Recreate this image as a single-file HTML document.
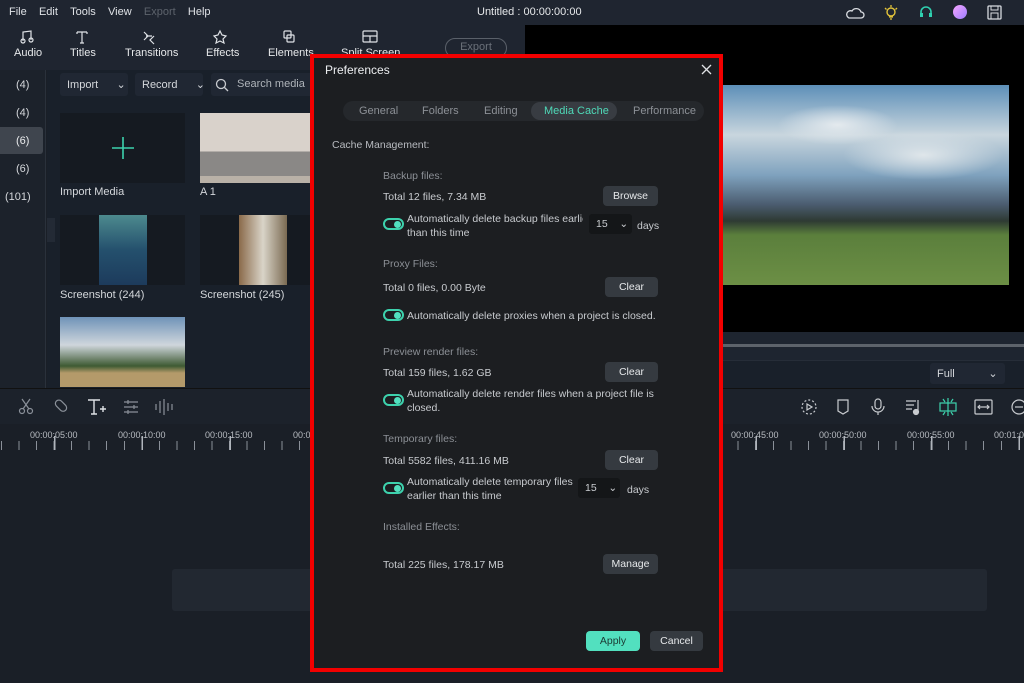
<!DOCTYPE html>
<html><head><meta charset="utf-8"><style>
*{margin:0;padding:0;box-sizing:border-box}
body{width:1024px;height:683px;overflow:hidden;background:#1a1f27;font-family:"Liberation Sans",sans-serif;color:#d0d3d8;position:relative;font-size:11px}
.a{position:absolute;white-space:nowrap}
.menu{left:0;top:0;width:1024px;height:25px;background:#1f2530}
.tool{left:0;top:25px;width:525px;height:45px;background:#1f2530}
.tb{color:#e6e8ea;font-size:11px;text-align:center}
.dlg{left:310px;top:54px;width:413px;height:618px;border:4px solid #f20000;background:#1c1e21}
.lab{color:#8c9096;font-size:10.5px}
.txt{color:#c8cbcf;font-size:10.5px}
.btn{background:#353a40;color:#e6e8ea;border-radius:4px;text-align:center;font-size:10.5px;line-height:20px;height:20px}
.tog{width:21px;height:12px;border:2px solid #3dd2ad;border-radius:7px}
.tog:after{content:"";position:absolute;right:1px;top:1px;width:7px;height:7px;border-radius:50%;background:#52e0bf}
.dd{background:#141618;border-radius:3px;height:20px;color:#c8cbcf;font-size:10.5px;line-height:20px;padding-left:7px}
.tick{height:14px;background:repeating-linear-gradient(90deg,#8a9099 0 1px,transparent 1px 17.54px)}
.maj{height:14px;background:repeating-linear-gradient(90deg,#b0b5bc 0 1.5px,transparent 1.5px 87.7px)}
.rl{color:#b8bcc2;font-size:9px}
</style></head><body>
<div class="a menu"></div>
<div class="a" style="left:9px;top:6px;font-size:11px;color:#dfe2e6;word-spacing:0">File&nbsp;&nbsp;&nbsp;&nbsp;Edit&nbsp;&nbsp;&nbsp;&nbsp;Tools&nbsp;&nbsp;&nbsp;&nbsp;View&nbsp;&nbsp;&nbsp;&nbsp;<span style="color:#5d636c">Export</span>&nbsp;&nbsp;&nbsp;&nbsp;Help</div>
<div class="a" style="left:477px;top:6px;color:#e6e8ea">Untitled : 00:00:00:00</div>
<svg class="a" style="left:845px;top:4px" width="170" height="18" viewBox="0 0 170 18">
<path d="M4 14h12a3 3 0 0 0 0-6a5 5 0 0 0-9-1a3.5 3.5 0 0 0-3 7z" fill="none" stroke="#d8dbe0" stroke-width="1.3"/>
<g transform="translate(38,0)"><circle cx="8" cy="8" r="4" fill="none" stroke="#e3c43a" stroke-width="1.4"/><path d="M6 13h4M7 15h2M8 1v2M2 4l1.5 1.5M14 4l-1.5 1.5" stroke="#e3c43a" stroke-width="1.3"/></g>
<g transform="translate(73,0)"><path d="M3 11V8a5 5 0 0 1 10 0v3" fill="none" stroke="#2fd0b0" stroke-width="1.6"/><rect x="2" y="9" width="3" height="4" fill="#2fd0b0"/><rect x="11" y="9" width="3" height="4" fill="#2fd0b0"/></g>
<defs><linearGradient id="g" x1="0" y1="0" x2="1" y2="1"><stop offset="0" stop-color="#f7a6ff"/><stop offset="1" stop-color="#9c7cff"/></linearGradient></defs>
<circle cx="115" cy="8" r="7" fill="url(#g)"/>
<g transform="translate(142,1)"><rect x="1" y="1" width="13" height="13" rx="1" fill="none" stroke="#d8dbe0" stroke-width="1.3"/><rect x="4" y="1" width="7" height="4" fill="none" stroke="#d8dbe0"/><rect x="4" y="8" width="7" height="6" fill="none" stroke="#d8dbe0"/></g>
</svg>
<div class="a tool"></div>
<svg class="a" style="left:20px;top:29px" width="370" height="16" viewBox="0 0 370 16" fill="none" stroke="#dfe2e6" stroke-width="1.2">
<path d="M3 12V3l8-1v9"/><circle cx="3" cy="12" r="2"/><circle cx="11" cy="11" r="2"/>
<path d="M57 3h10M62 3v11M57 3v2M67 3v2M60 14h4"/>
<path d="M124 3l4 4l-4 4M134 7l-4 4l4 4M126 7h6"/>
<path d="M200 2l2 4l4 1l-3 3l1 4l-4-2l-4 2l1-4l-3-3l4-1z"/>
<rect x="264" y="2" width="7" height="7" rx="1"/><rect x="267" y="6" width="7" height="7" rx="1"/>
<rect x="343" y="2" width="14" height="11" rx="1"/><path d="M343 7h14M350 7v6"/>
</svg>
<div class="a tb" style="left:14px;top:47px">Audio</div>
<div class="a tb" style="left:70px;top:47px">Titles</div>
<div class="a tb" style="left:125px;top:47px">Transitions</div>
<div class="a tb" style="left:206px;top:47px">Effects</div>
<div class="a tb" style="left:268px;top:47px">Elements</div>
<div class="a tb" style="left:341px;top:47px">Split Screen</div>
<div class="a" style="left:445px;top:38px;width:62px;height:20px;border:1.5px solid #5a6069;border-radius:10px;color:#6a7079;text-align:center;line-height:17px">Export</div>
<div class="a" style="left:0;top:70px;width:46px;height:318px;background:#1c222b;border-right:1px solid #2a313b"></div>
<div class="a" style="left:0;top:127px;width:43px;height:27px;background:#3f454e;border-radius:0 3px 3px 0"></div>
<div class="a" style="left:16px;top:79px;color:#d4d7db">(4)</div>
<div class="a" style="left:16px;top:107px;color:#d4d7db">(4)</div>
<div class="a" style="left:16px;top:135px;color:#e8eaec">(6)</div>
<div class="a" style="left:16px;top:163px;color:#d4d7db">(6)</div>
<div class="a" style="left:5px;top:191px;color:#d4d7db">(101)</div>
<div class="a" style="left:47px;top:70px;width:270px;height:318px;background:#19202a"></div>
<div class="a" style="left:60px;top:73px;width:68px;height:23px;background:#202733;border-radius:3px;padding:5px 7px;color:#d4d7db">Import&nbsp;&nbsp;&nbsp;&nbsp;&nbsp;&nbsp;⌄</div>
<div class="a" style="left:135px;top:73px;width:68px;height:23px;background:#202733;border-radius:3px;padding:5px 7px;color:#d4d7db">Record&nbsp;&nbsp;&nbsp;&nbsp;&nbsp;&nbsp;⌄</div>
<div class="a" style="left:211px;top:73px;width:110px;height:23px;background:#202733;border-radius:3px;padding:5px 26px;color:#aeb3b9">Search media</div>
<svg class="a" style="left:215px;top:78px" width="14" height="14"><circle cx="6" cy="6" r="4.5" fill="none" stroke="#c8cbcf" stroke-width="1.3"/><path d="M9.5 9.5L13 13" stroke="#c8cbcf" stroke-width="1.3"/></svg>
<div class="a" style="left:60px;top:113px;width:125px;height:70px;background:#151a21"></div>
<svg class="a" style="left:111px;top:136px" width="24" height="24"><path d="M12 1v22M1 12h22" stroke="#3dd2ad" stroke-width="1.6"/></svg>
<div class="a" style="left:60px;top:186px;color:#d4d7db">Import Media</div>
<div class="a" style="left:200px;top:113px;width:110px;height:70px;background:linear-gradient(180deg,#d9d2cb 0 55%,#8a8886 55% 90%,#b9b1a7 90%)"></div>
<div class="a" style="left:200px;top:186px;color:#d4d7db">A 1</div>
<div class="a" style="left:60px;top:215px;width:125px;height:70px;background:#151a21"></div>
<div class="a" style="left:99px;top:215px;width:48px;height:70px;background:linear-gradient(180deg,#4d8a8e,#24506d 50%,#1d3b5c)"></div>
<div class="a" style="left:200px;top:215px;width:110px;height:70px;background:#151a21"></div>
<div class="a" style="left:239px;top:215px;width:48px;height:70px;background:linear-gradient(90deg,#8a6a4a,#d9d4c8 50%,#7a6a52)"></div>
<div class="a" style="left:60px;top:289px;color:#d4d7db">Screenshot (244)</div>
<div class="a" style="left:200px;top:289px;color:#d4d7db">Screenshot (245)</div>
<div class="a" style="left:60px;top:317px;width:125px;height:70px;background:linear-gradient(180deg,#6f93b8 0,#cfd6dc 40%,#3e5a33 70%,#b49a6a 80%)"></div>
<div class="a" style="left:47px;top:218px;width:8px;height:24px;background:#232a35"></div>
<div class="a" style="left:525px;top:25px;width:499px;height:307px;background:#000"></div>
<div class="a" style="left:723px;top:85px;width:286px;height:200px;background:radial-gradient(ellipse 60px 20px at 40% 20%,#e4eaee,transparent),radial-gradient(ellipse 80px 25px at 70% 35%,#dfe6ea,transparent),linear-gradient(180deg,#5d8fb8 0,#c9d6de 25%,#7fa2be 45%,#4a5b6e 60%,#2e3a33 68%,#5b7f3c 75%,#6c8f45 100%)"></div>
<div class="a" style="left:525px;top:332px;width:499px;height:28px;background:#1e2530"></div>
<div class="a" style="left:722px;top:344px;width:302px;height:3px;background:#5d636b"></div>
<div class="a" style="left:525px;top:360px;width:499px;height:28px;background:#19202a;border-top:1px solid #262d38"></div>
<div class="a" style="left:930px;top:363px;width:75px;height:21px;background:#202733;border-radius:3px;padding:4px 7px;color:#d4d7db">Full&nbsp;&nbsp;&nbsp;&nbsp;&nbsp;&nbsp;&nbsp;&nbsp;&nbsp;&nbsp;&nbsp;⌄</div>
<div class="a" style="left:0;top:388px;width:1024px;height:36px;background:#1c222b;border-top:1px solid #111"></div>
<svg class="a" style="left:18px;top:397px" width="160" height="20" fill="none" stroke="#8a9099" stroke-width="1.2">
<circle cx="4" cy="14" r="2.5"/><circle cx="12" cy="14" r="2.5"/><path d="M5 12l7-10M11 12L4 2"/>
<rect x="37" y="5" width="13" height="7" rx="3.5" transform="rotate(45 43 8)"/>
<path d="M70 3h12M76 3v14M73 17h6M82 12h6M85 9v6" stroke="#dfe2e6" stroke-width="1.4"/>
<path d="M106 5h14M106 10h14M106 15h14M110 3v4M116 8v4M110 13v4"/>
<path d="M142 4v12M146 2v16M150 6v8M138 7v6M154 7v6"/>
</svg>
<svg class="a" style="left:800px;top:397px" width="224" height="20" fill="none" stroke="#c8cbcf" stroke-width="1.2">
<circle cx="9" cy="10" r="7" stroke-dasharray="2 2"/><path d="M7 7l5 3l-5 3z"/>
<path d="M38 3h10v11l-5 3l-5-3z"/>
<rect x="75" y="2" width="6" height="10" rx="3"/><path d="M72 9a6 6 0 0 0 12 0M78 15v3"/>
<path d="M106 4h10M106 8h8M106 12h6M118 3v12"/><circle cx="116" cy="15" r="2.5" fill="#c8cbcf"/>
<g stroke="#3dd2ad"><rect x="140" y="6" width="16" height="8"/><path d="M148 1v18M143 2l2 3M153 2l-2 3M143 18l2-3M153 18l-2-3"/></g>
<rect x="175" y="3" width="17" height="14" rx="1"/><path d="M178 10h11M180 8l-2 2l2 2M187 8l2 2l-2 2"/>
<circle cx="219" cy="10" r="7"/><path d="M215 10h8"/>
</svg>
<div class="a" style="left:0;top:424px;width:1024px;height:32px;background:#1a1f27"></div>
<div class="a tick" style="left:1px;top:441px;width:1023px;height:9px"></div>
<div class="a maj" style="left:54px;top:436px;width:970px"></div>
<div class="a rl" style="left:30px;top:430px">00:00:05:00</div>
<div class="a rl" style="left:118px;top:430px">00:00:10:00</div>
<div class="a rl" style="left:205px;top:430px">00:00:15:00</div>
<div class="a rl" style="left:293px;top:430px">00:00:20:00</div>
<div class="a rl" style="left:731px;top:430px">00:00:45:00</div>
<div class="a rl" style="left:819px;top:430px">00:00:50:00</div>
<div class="a rl" style="left:907px;top:430px">00:00:55:00</div>
<div class="a rl" style="left:994px;top:430px">00:01:00:00</div>
<div class="a" style="left:172px;top:569px;width:815px;height:42px;background:#222831;border-radius:3px"></div>
<div class="a dlg"></div>
<div class="a" style="left:325px;top:63px;font-size:12px;color:#eceef0">Preferences</div>
<svg class="a" style="left:701px;top:64px" width="11" height="11"><path d="M1 1l9 9M10 1l-9 9" stroke="#e0e2e5" stroke-width="1.3"/></svg>
<div class="a" style="left:343px;top:101px;width:361px;height:20px;background:#25282c;border-radius:10px"></div>
<div class="a" style="left:531px;top:102px;width:86px;height:18px;background:#383c42;border-radius:9px"></div>
<div class="a" style="top:105px;left:359px;color:#8c9096">General</div>
<div class="a" style="top:105px;left:422px;color:#8c9096">Folders</div>
<div class="a" style="top:105px;left:484px;color:#8c9096">Editing</div>
<div class="a" style="top:105px;left:544px;color:#4fd9b8">Media Cache</div>
<div class="a" style="top:105px;left:633px;color:#8c9096">Performance</div>
<div class="a txt" style="left:332px;top:139px;color:#b8bbc0">Cache Management:</div>

<div class="a lab" style="left:383px;top:170px">Backup files:</div>
<div class="a txt" style="left:383px;top:191px">Total 12 files, 7.34 MB</div>
<div class="a btn" style="left:603px;top:186px;width:55px">Browse</div>
<div class="a tog" style="left:383px;top:218px"></div>
<div class="a txt" style="left:407px;top:213px;line-height:13.5px;width:176px;overflow:hidden">Automatically delete backup files earlie<br>than this time</div>
<div class="a dd" style="left:589px;top:214px;width:43px">15 &nbsp;&nbsp;&nbsp;⌄</div>
<div class="a txt" style="left:637px;top:220px">days</div>

<div class="a lab" style="left:383px;top:258px">Proxy Files:</div>
<div class="a txt" style="left:383px;top:282px">Total 0 files, 0.00 Byte</div>
<div class="a btn" style="left:605px;top:277px;width:53px">Clear</div>
<div class="a tog" style="left:383px;top:309px"></div>
<div class="a txt" style="left:407px;top:310px">Automatically delete proxies when a project is closed.</div>

<div class="a lab" style="left:383px;top:346px">Preview render files:</div>
<div class="a txt" style="left:383px;top:367px">Total 159 files, 1.62 GB</div>
<div class="a btn" style="left:605px;top:362px;width:53px">Clear</div>
<div class="a tog" style="left:383px;top:394px"></div>
<div class="a txt" style="left:407px;top:388px;line-height:13.5px">Automatically delete render files when a project file is<br>closed.</div>

<div class="a lab" style="left:383px;top:433px">Temporary files:</div>
<div class="a txt" style="left:383px;top:455px">Total 5582 files, 411.16 MB</div>
<div class="a btn" style="left:605px;top:450px;width:53px">Clear</div>
<div class="a tog" style="left:383px;top:482px"></div>
<div class="a txt" style="left:407px;top:476px;line-height:13.5px">Automatically delete temporary files<br>earlier than this time</div>
<div class="a dd" style="left:578px;top:478px;width:42px">15 &nbsp;&nbsp;&nbsp;⌄</div>
<div class="a txt" style="left:627px;top:484px">days</div>

<div class="a lab" style="left:383px;top:521px">Installed Effects:</div>
<div class="a txt" style="left:383px;top:559px">Total 225 files, 178.17 MB</div>
<div class="a btn" style="left:603px;top:554px;width:55px">Manage</div>

<div class="a btn" style="left:586px;top:631px;width:54px;background:#52e0bf;color:#1c3a33">Apply</div>
<div class="a btn" style="left:650px;top:631px;width:53px">Cancel</div>
</body></html>
